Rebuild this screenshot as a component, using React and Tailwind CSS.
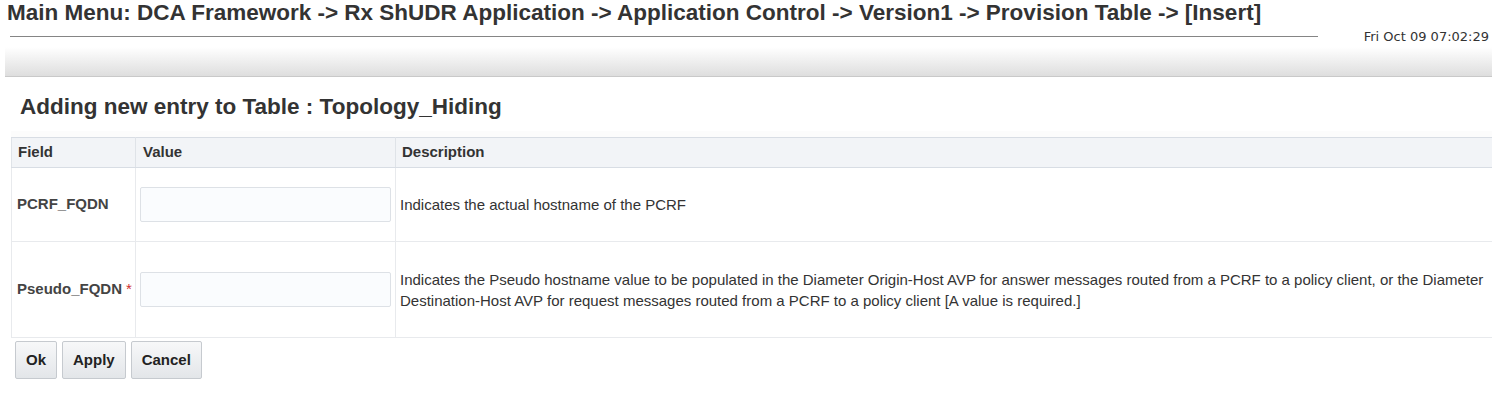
import React from 'react';

const rows = [
  {
    field: 'PCRF_FQDN',
    required: false,
    height: 'h-[74px]',
    desc: 'Indicates the actual hostname of the PCRF',
  },
  {
    field: 'Pseudo_FQDN',
    required: true,
    height: 'h-[96px]',
    desc: 'Indicates the Pseudo hostname value to be populated in the Diameter Origin-Host AVP for answer messages routed from a PCRF to a policy client, or the Diameter Destination-Host AVP for request messages routed from a PCRF to a policy client [A value is required.]',
  },
];

const App = () => {
  return (
    <div className="w-[1492px] h-[394px] overflow-hidden bg-white text-[#333] font-['Liberation_Sans',Arial,sans-serif]">
      {/* breadcrumb header */}
      <div className="flex">
        <div className="flex-1">
          <h1 className="pl-[7px] text-[22.5px] leading-[26px] font-bold text-[#333] whitespace-nowrap">
            Main Menu: DCA Framework -&gt; Rx ShUDR Application -&gt; Application Control -&gt; Version1 -&gt; Provision Table -&gt; [Insert]
          </h1>
          <div className="mt-[10px] ml-[10px] h-px bg-[#858585]"></div>
        </div>
        <div className="w-[174px] pr-[3px] pt-[29px] text-right text-[13px] leading-[15px] text-[#333] font-['DejaVu_Sans',Verdana,sans-serif]">
          Fri Oct 09 07:02:29
        </div>
      </div>

      <div className="mt-[3px] ml-[5px] h-[30px] bg-gradient-to-b from-white to-[#dedede] border-b border-[#c9c9c9]"></div>

      <h2 className="mt-[17px] pl-[20px] text-[22.5px] leading-[26px] font-bold text-[#333]">
        Adding new entry to Table : Topology_Hiding
      </h2>

      <div className="mt-[11px] ml-[11px] pt-[6px] bg-[#fcfcfc]">
        <table className="w-full border-collapse text-[15px]">
          <thead>
            <tr className="h-[30px] bg-[#f2f4f7]">
              <th className="w-[124px] border border-[#dfe3e8] border-y-[#d8dde4] pl-[6px] text-left font-bold text-[#333]">Field</th>
              <th className="w-[260px] border border-[#dfe3e8] border-y-[#d8dde4] pl-[7px] text-left font-bold text-[#333]">Value</th>
              <th className="border-y border-l border-[#dfe3e8] border-y-[#d8dde4] pl-[6px] text-left font-bold text-[#333]">Description</th>
            </tr>
          </thead>
          <tbody className="bg-white">
            {rows.map((r) => (
              <tr key={r.field} className={r.height}>
                <td className="border border-[#e8eaed] pl-[5px] font-bold text-[#444] whitespace-nowrap">
                  {r.field}
                  {r.required && <span className="ml-[4px] text-[#d03030] font-normal">*</span>}
                </td>
                <td className="border border-[#e8eaed] pl-[4px]">
                  <input
                    type="text"
                    className="block w-[251px] h-[35px] bg-[#fafcfe] border border-[#dde1e6] rounded-[2px] outline-none"
                  />
                </td>
                <td className="border-y border-l border-[#e8eaed] pl-[4px] pr-[6px] leading-[21px] text-[#333]">
                  {r.desc}
                </td>
              </tr>
            ))}
          </tbody>
        </table>
      </div>

      <div className="flex gap-[5px] ml-[15px] mt-[3px]">
        {['Ok', 'Apply', 'Cancel'].map((b) => (
          <button
            key={b}
            className="h-[38px] px-[10px] bg-gradient-to-b from-[#f7f8f9] to-[#e3e6e9] border border-[#c6cacf] rounded-[2px] text-[15px] font-bold text-[#222]"
          >
            {b}
          </button>
        ))}
      </div>
    </div>
  );
};

export default App;
